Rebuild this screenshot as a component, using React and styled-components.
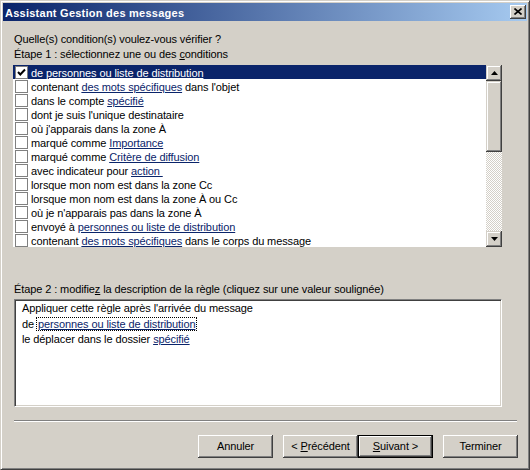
import React from "react";
import styled, { createGlobalStyle } from "styled-components";

const GlobalStyle = createGlobalStyle`
  html, body { margin: 0; padding: 0; background: #D4D0C8; }
  body { font-family: "Liberation Sans", Arial, sans-serif; font-size: 11px; color: #000; }
  * { box-sizing: border-box; }
`;

const Window = styled.div`
  width: 530px;
  height: 470px;
  display: flex;
  flex-direction: column;
  background: #d4d0c8;
  border: 1px solid;
  border-color: #d4d0c8 #404040 #404040 #d4d0c8;
  box-shadow: inset 1px 1px #fff, inset -1px -1px #808080;
  padding: 2px;
`;

const TitleBar = styled.div`
  height: 18px;
  flex: none;
  display: flex;
  align-items: center;
  justify-content: space-between;
  padding: 0 1px 0 2px;
  background: linear-gradient(to right, #0a246a, #a6caf0);
`;

const TitleText = styled.span`
  color: #fff;
  font-weight: bold;
  font-size: 11px;
  letter-spacing: 0.25px;
  line-height: 18px;
  padding-top: 1px;
  white-space: nowrap;
`;

const CloseButton = styled.div`
  width: 16px;
  height: 14px;
  background: #d4d0c8;
  box-shadow: inset -1px -1px #404040, inset 1px 1px #fff, inset -2px -2px #808080;
  display: flex;
  align-items: center;
  justify-content: center;
  padding-bottom: 1px;
`;

const Body = styled.div`
  flex: 1;
  display: flex;
  flex-direction: column;
  padding: 12px 9px 0 11px;
  letter-spacing: -0.1px;
`;

const Label = styled.div`
  line-height: 13px;
  white-space: nowrap;
  margin-top: ${(p) => p.$mt || 0}px;
`;

const Access = styled.span`
  text-decoration: underline;
`;

const Link = styled.span`
  color: #0a246a;
  text-decoration: underline;
`;

const FocusLink = styled(Link)`
  outline: 1px dotted #000;
  outline-offset: 0;
  padding: 0 1px;
`;

const ListBox = styled.div`
  margin: 4px 0 0 -1px;
  width: 489px;
  height: 182px;
  background: #fff;
  display: flex;
`;

const Rows = styled.div`
  flex: 1;
  display: flex;
  flex-direction: column;
  overflow: hidden;
`;

const Row = styled.div`
  height: 14px;
  flex: none;
  display: flex;
  align-items: flex-start;
  gap: 3px;
  padding-left: 2px;
  background: ${(p) => (p.$selected ? "#0a246a" : "transparent")};
  color: ${(p) => (p.$selected ? "#fff" : "#000")};
  & ${Link} {
    color: ${(p) => (p.$selected ? "#fff" : "#0a246a")};
  }
`;

const CheckBox = styled.span`
  width: 13px;
  height: 13px;
  flex: none;
  margin-top: 1px;
  border: 1px solid #808080;
  background: #fff;
  display: flex;
  align-items: center;
  justify-content: center;
`;

const RowText = styled.span`
  line-height: 14px;
  padding-top: 1px;
  white-space: nowrap;
`;

const ScrollBar = styled.div`
  width: 16px;
  flex: none;
  display: flex;
  flex-direction: column;
`;

const raised = `
  background: #d4d0c8;
  box-shadow: inset -1px -1px #404040, inset 1px 1px #d4d0c8, inset -2px -2px #808080, inset 2px 2px #fff;
`;

const ScrollButton = styled.div`
  height: 16px;
  flex: none;
  ${raised}
  display: flex;
  align-items: center;
  justify-content: center;
`;

const Thumb = styled.div`
  height: 71px;
  flex: none;
  ${raised}
`;

const Track = styled.div`
  flex: 1;
  background: repeating-conic-gradient(#fff 0 25%, #d4d0c8 0 50%) 0 0 / 2px 2px;
`;

const DescBox = styled.div`
  margin-top: 3px;
  width: 488px;
  height: 108px;
  background: #fff;
  border: 1px solid;
  border-color: #808080 #fff #fff #808080;
  box-shadow: inset 1px 1px #404040, inset -1px -1px #d4d0c8;
  padding: 1px 0 0 7px;
`;

const DescLine = styled.div`
  line-height: 15.5px;
  white-space: nowrap;
`;

const Separator = styled.div`
  margin-top: 13px;
  width: 503px;
  height: 2px;
  border-top: 1px solid #808080;
  border-bottom: 1px solid #fff;
`;

const ButtonRow = styled.div`
  margin-top: 13px;
  display: flex;
  justify-content: flex-end;
  gap: 10px;
`;

const ButtonPair = styled.div`
  display: flex;
`;

const Button = styled.button`
  width: 75px;
  height: 23px;
  padding: 0 0 1px;
  border: none;
  font-family: inherit;
  font-size: 11px;
  letter-spacing: -0.1px;
  color: #000;
  background: #d4d0c8;
  box-shadow: ${(p) =>
    p.$default
      ? "inset 0 0 0 1px #000, inset -2px -2px #404040, inset 2px 2px #fff, inset -3px -3px #808080"
      : "inset -1px -1px #404040, inset 1px 1px #fff, inset -2px -2px #808080"};
`;

const Check = () => (
  <svg width="11" height="11" viewBox="0 0 11 11">
    <polyline points="2,5 4.3,7.5 9,2.5" fill="none" stroke="#000" strokeWidth="2" />
  </svg>
);

const Arrow = ({ down }) => (
  <svg width="7" height="4" viewBox="0 0 7 4">
    <polygon points={down ? "0,0 7,0 3.5,4" : "3.5,0 7,4 0,4"} fill="#000" />
  </svg>
);

const CloseX = () => (
  <svg width="8" height="7" viewBox="0 0 8 7">
    <path d="M0.5 0.5 L7.5 6.5 M7.5 0.5 L0.5 6.5" stroke="#000" strokeWidth="1.6" fill="none" />
  </svg>
);

const rows = [
  ["de ", ["personnes ou liste de distribution"], ""],
  ["contenant ", ["des mots spécifiques"], " dans l'objet"],
  ["dans le compte ", ["spécifié"], ""],
  ["dont je suis l'unique destinataire", null, ""],
  ["où j'apparais dans la zone À", null, ""],
  ["marqué comme ", ["Importance"], ""],
  ["marqué comme ", ["Critère de diffusion"], ""],
  ["avec indicateur pour ", ["action\u00a0"], ""],
  ["lorsque mon nom est dans la zone Cc", null, ""],
  ["lorsque mon nom est dans la zone À ou Cc", null, ""],
  ["où je n'apparais pas dans la zone À", null, ""],
  ["envoyé à ", ["personnes ou liste de distribution"], ""],
  ["contenant ", ["des mots spécifiques"], " dans le corps du message"],
];

export default function App() {
  return (
    <>
      <GlobalStyle />
      <Window>
        <TitleBar>
          <TitleText>Assistant Gestion des messages</TitleText>
          <CloseButton>
            <CloseX />
          </CloseButton>
        </TitleBar>
        <Body>
          <Label>Quelle(s) condition(s) voulez-vous vérifier ?</Label>
          <Label $mt={2}>
            Étape 1 : sélectionnez une ou des <Access>c</Access>onditions
          </Label>
          <ListBox>
            <Rows>
              {rows.map(([pre, link, post], i) => (
                <Row key={i} $selected={i === 0}>
                  <CheckBox>{i === 0 && <Check />}</CheckBox>
                  <RowText>
                    {pre}
                    {link && <Link>{link[0]}</Link>}
                    {post}
                  </RowText>
                </Row>
              ))}
            </Rows>
            <ScrollBar>
              <ScrollButton>
                <Arrow />
              </ScrollButton>
              <Thumb />
              <Track />
              <ScrollButton>
                <Arrow down />
              </ScrollButton>
            </ScrollBar>
          </ListBox>
          <Label $mt={36}>
            Étape 2 : modifie<Access>z</Access> la description de la règle (cliquez sur une valeur soulignée)
          </Label>
          <DescBox>
            <DescLine>Appliquer cette règle après l'arrivée du message</DescLine>
            <DescLine>
              de <FocusLink>personnes ou liste de distribution</FocusLink>
            </DescLine>
            <DescLine>
              le déplacer dans le dossier <Link>spécifié</Link>
            </DescLine>
          </DescBox>
          <Separator />
          <ButtonRow>
            <Button>Annuler</Button>
            <ButtonPair>
              <Button>
                &lt; <Access>P</Access>récédent
              </Button>
              <Button $default>
                <Access>S</Access>uivant &gt;
              </Button>
            </ButtonPair>
            <Button>Terminer</Button>
          </ButtonRow>
        </Body>
      </Window>
    </>
  );
}
